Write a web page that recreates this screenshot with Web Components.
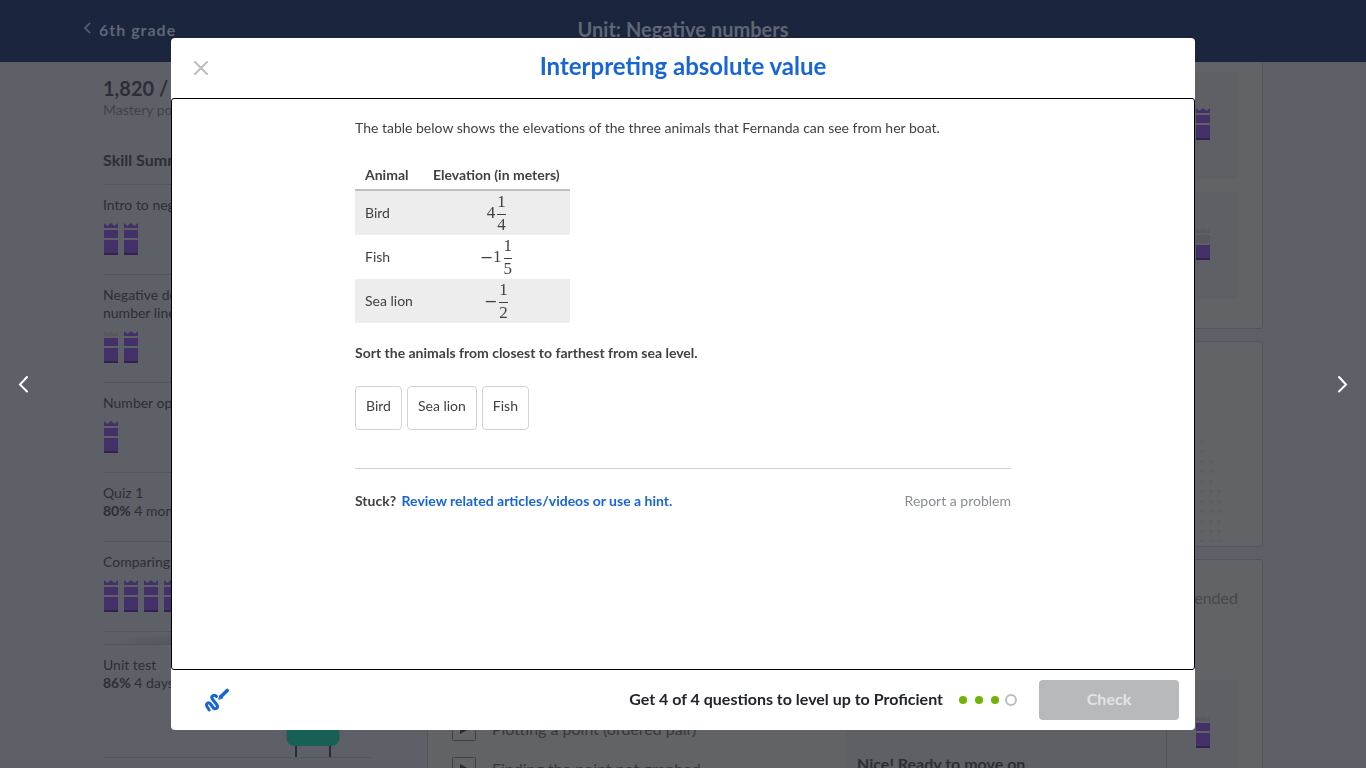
<!DOCTYPE html>
<html lang="en">
<head>
<meta charset="utf-8">
<title>Interpreting absolute value</title>
<style>
  body {
    margin: 0;
    height: 100vh;
    overflow: hidden;
    background: #5e6068;
    color: #2c2e35;
    font-family: Lato, "Liberation Sans", sans-serif;
    font-size: 14px;
    line-height: 18px;
    --line: #53555b;
    --card: #626366;
    --tile: #5e6066;
    --ink: #3f4244;
    --blue: #1865d6;
  }
</style>
</head>
<body>
<unit-page></unit-page>
<exercise-modal heading="Interpreting absolute value">
  <exercise-question></exercise-question>
</exercise-modal>

<script>
function defineElement(name, html, setup) {
  const template = document.createElement("template");
  template.innerHTML = html;

  customElements.define(name, class extends HTMLElement {
    constructor() {
      super();
      this.attachShadow({ mode: "open" });
      this.shadowRoot.appendChild(template.content.cloneNode(true));
    }

    connectedCallback() {
      if (setup) setup(this, this.shadowRoot);
    }
  });
}

// level 3 = full crown, 2 = no top, 1 = base only
defineElement("mastery-crown", `
<style>
  :host { display: block; width: 14px; height: 32px; }
  svg { display: block; }
  path { fill: #57595d; }
  .on { fill: #433069; }
  .base { fill: #2f2349; }
</style>
<svg width="14" height="32" viewBox="0 0 14 32" aria-hidden="true">
  <path data-level="3" d="M0 0l3.500 3L7 0l3.500 3L14 0v5H0z"/>
  <path data-level="2" d="M0 7h14v8H0z"/>
  <path data-level="1" d="M0 17h14v13H0z"/>
  <path class="base" d="M0 30h14v2H0z"/>
</svg>
`, (host, root) => {
  const level = Number(host.getAttribute("level") || 3);
  root.querySelectorAll("[data-level]").forEach(path => {
    path.classList.toggle("on", Number(path.dataset.level) <= level);
  });
});

defineElement("skill-item", `
<style>
  :host { display: block; border-top: 1px solid var(--line); padding: 11px 0 19px; }
  .crowns { display: flex; gap: 6px; margin-top: 9px; padding-left: 1px; }
  .crowns:empty { display: none; }
</style>
<slot></slot>
<div class="crowns"></div>
`, (host, root) => {
  const levels = (host.getAttribute("crowns") || "").split(" ").filter(Boolean);
  root.querySelector(".crowns").innerHTML =
    levels.map(level => `<mastery-crown level="${level}"></mastery-crown>`).join("");
});

defineElement("unit-header", `
<style>
  :host { display: block; background: #1b253d; color: #5f6674; }
  .bar {
    display: grid;
    grid-template-columns: 1fr auto 1fr;
    align-items: center;
    max-width: 1200px;
    height: 58px;
    padding-bottom: 4px;
    margin: 0 auto;
  }
  a {
    display: flex;
    align-items: center;
    gap: 8px;
    padding-top: 2px;
    color: inherit;
    font-size: 16px;
    font-weight: 700;
    letter-spacing: 1px;
    text-decoration: none;
  }
  h1 { margin: 0; font-size: 20px; line-height: 24px; }
</style>
<div class="bar">
  <a href="#"><svg width="8" height="16" viewBox="0 0 8 16" fill="none" stroke="currentColor" stroke-width="1.500"><path d="M7 1 2 6l5 5"/></svg>6th grade</a>
  <h1>Unit: Negative numbers</h1>
</div>
`);

defineElement("skill-sidebar", `
<style>
  :host { display: block; }
  .points { padding-top: 14px; font-size: 20px; line-height: 24px; font-weight: 700; }
  .caption { padding-top: 1px; color: #414349; }
  h2 { margin: 0; padding: 31px 0 15px; font-size: 16px; line-height: 19px; }
  .quiz { padding-bottom: 21px; }
  .last { padding-bottom: 0; }
  .shade {
    height: 12px;
    border-top: 1px solid var(--line);
    background: radial-gradient(ellipse at 50% 100%, #4c4e54, transparent 70%);
  }
  .desk { display: flex; justify-content: flex-end; padding-right: 31px; border-bottom: 1px solid var(--line); }
  .desk svg { display: block; }
</style>
<div class="points">1,820 / 2,000</div>
<div class="caption">Mastery points</div>
<h2>Skill Summary</h2>
<skill-item crowns="3 3">Intro to negative numbers</skill-item>
<skill-item crowns="2 3">Negative decimals on the<br>number line</skill-item>
<skill-item crowns="3">Number opposites</skill-item>
<skill-item class="quiz">Quiz 1<br><b>80%</b> 4 months ago</skill-item>
<skill-item crowns="3 3 3 3">Comparing negative numbers</skill-item>
<div class="shade"></div>
<skill-item class="last">Unit test<br><b>86%</b> 4 days ago</skill-item>
<div class="desk">
  <svg width="54" height="65" viewBox="0 0 54 65">
    <path d="M10 50v15M44 50v15" stroke="#292b33" stroke-width="2"/>
    <rect x="0.500" y="14" width="53" height="40" rx="8" fill="#186055"/>
  </svg>
</div>
`);

defineElement("lesson-tile", `
<style>
  :host { display: grid; grid-template-columns: 1fr 72px; background: var(--tile); height: 107px; }
  .text { padding: 75px 12px 0; font-size: 16px; font-weight: 700; }
  .score { display: flex; align-items: center; justify-content: flex-end; padding: 0 28px 4px 0; border-left: 1px solid var(--line); }
</style>
<div class="text"><slot></slot></div>
<div class="score"></div>
`, (host, root) => {
  root.querySelector(".score").innerHTML =
    `<mastery-crown level="${host.getAttribute("level")}"></mastery-crown>`;
});

defineElement("lesson-link", `
<style>
  :host { display: block; }
  a { display: flex; align-items: center; gap: 16px; color: #36383d; font-size: 16px; line-height: 24px; text-decoration: none; }
</style>
<a href="#">
  <svg width="24" height="24" viewBox="0 0 24 24"><rect x=".5" y=".5" width="23" height="23" rx="1" fill="none" stroke="#3f4146"/><path d="M8 7l9 5-9 5z" fill="#292b31"/></svg>
  <slot></slot>
</a>
`);

defineElement("lesson-cards", `
<style>
  :host { display: grid; gap: 12px; align-content: start; }
  section { box-sizing: border-box; background: var(--card); border: 1px solid var(--line); border-radius: 3px; padding: 24px; }
  .tiles { display: grid; gap: 13px; padding: 10px 24px 29px; border-top: 0; }
  .quiz { display: flex; justify-content: flex-end; align-items: flex-end; height: 206px; padding: 4px 39px; }
  .practice { padding-top: 29px; }
  .status { text-align: right; font-size: 16px; color: #46484c; }
  .columns { display: grid; grid-template-columns: 1fr 1fr; padding-top: 73px; align-items: start; }
  .links { display: grid; gap: 16px; padding-top: 37px; }
</style>
<section class="tiles">
  <lesson-tile level="3"></lesson-tile>
  <lesson-tile level="1"></lesson-tile>
</section>
<section class="quiz">
  <svg width="24" height="104" viewBox="0 0 24 104" fill="none" stroke="#5c5e62" stroke-width="3" stroke-dasharray="3 7">
    <path d="M3 2v102M12 22v82M20 52v52"/>
  </svg>
</section>
<section class="practice">
  <div class="status">Recommended</div>
  <div class="columns">
    <div class="links">
      <lesson-link>Plotting a point (ordered pair)</lesson-link>
      <lesson-link>Finding the point not graphed</lesson-link>
    </div>
    <lesson-tile level="2">Nice! Ready to move on</lesson-tile>
  </div>
</section>
`);

defineElement("unit-page", `
<style>
  :host { display: block; height: 100%; overflow: hidden; }
  main { display: grid; grid-template-columns: 268px 1fr; gap: 56px; max-width: 1160px; margin: 0 auto; }
</style>
<unit-header></unit-header>
<main>
  <skill-sidebar></skill-sidebar>
  <lesson-cards></lesson-cards>
</main>
`);

defineElement("exercise-modal", `
<style>
  :host {
    position: fixed;
    inset: 0;
    display: grid;
    grid-template-columns: minmax(48px, 1fr) minmax(0, 1024px) minmax(48px, 1fr);
    align-items: center;
  }
  button { font: inherit; border: 0; padding: 0; background: none; cursor: pointer; }
  button svg { display: block; margin: auto; }
  .nav { width: 48px; height: 48px; color: #fff; }
  .next { justify-self: end; }
  .dialog {
    display: grid;
    grid-template-rows: 60px 1fr 60px;
    height: calc(100vh - 76px);
    border-radius: 4px;
    background: #fff;
    overflow: hidden;
  }
  header { display: grid; grid-template-columns: 60px 1fr 60px; align-items: center; }
  .close { height: 60px; color: #babec2; }
  h2 { margin: 0; padding-bottom: 4px; text-align: center; font-size: 24px; line-height: 28px; color: var(--blue); }
  .content { border: 1px solid #000; border-radius: 3px; overflow: auto; }
  footer { display: flex; align-items: center; padding: 0 16px 0 32px; color: #21242c; }
  .goal { margin-left: auto; padding-bottom: 2px; font-size: 16px; font-weight: 700; }
  .dots { margin: 0 20px 0 14px; }
  .check { width: 140px; height: 40px; padding-bottom: 2px; border-radius: 4px; background: #b8b9bb; color: #e3e4e6; font-size: 16px; font-weight: 700; }
</style>
<button class="nav" aria-label="Previous">
  <svg width="12" height="18" viewBox="0 0 12 18" fill="none" stroke="currentColor" stroke-width="2" stroke-linecap="round"><path d="M9 2 2 9.500l7 7"/></svg>
</button>
<div class="dialog" role="dialog" aria-modal="true" aria-labelledby="title">
  <header>
    <button class="close" aria-label="Close">
      <svg width="14" height="14" viewBox="0 0 14 14" fill="none" stroke="currentColor" stroke-width="2" stroke-linecap="round"><path d="M1 1l12 12M13 1 1 13"/></svg>
    </button>
    <h2 id="title"></h2>
  </header>
  <div class="content"><slot></slot></div>
  <footer>
    <button aria-label="Scratchpad">
      <svg width="28" height="28" viewBox="0 0 28 28" fill="none" stroke="#1865d6" stroke-linecap="round" stroke-linejoin="round">
        <path stroke-width="3" d="M13.500 10.500C11.500 8 8 10 9 12.500l5 6.500c1.500 2.500-1 5-3.500 3l-3-4C5.500 15.500 2.500 17.500 4 20.500l2.200 3.500"/>
        <path stroke-width="3.600" d="M18.500 10 24.200 4.500"/>
        <path fill="#1865d6" stroke-width="1" d="M15.700 13l1.300-4 2.700 2.700z"/>
      </svg>
    </button>
    <span class="goal">Get 4 of 4 questions to level up to Proficient</span>
    <svg class="dots" width="62" height="14" viewBox="0 0 62 14" fill="#71b307">
      <circle cx="6" cy="7" r="4"/><circle cx="22" cy="7" r="4"/><circle cx="38" cy="7" r="4"/>
      <circle cx="54" cy="7" r="5" fill="none" stroke="#babec2" stroke-width="2"/>
    </svg>
    <button class="check" disabled>Check</button>
  </footer>
</div>
<button class="nav next" aria-label="Next">
  <svg width="12" height="18" viewBox="0 0 12 18" fill="none" stroke="currentColor" stroke-width="2" stroke-linecap="round"><path d="M3 2l7 7.500-7 7"/></svg>
</button>
`, (host, root) => {
  root.querySelector("h2").textContent = host.getAttribute("heading");
});

defineElement("mixed-number", `
<style>
  :host { display: inline-flex; align-items: center; font-family: "Liberation Serif", serif; font-size: 17px; line-height: 20px; }
  .sign { font-family: "DejaVu Math TeX Gyre", "DejaVu Serif", serif; font-size: 16px; }
  .fraction { display: grid; margin-left: 2px; text-align: center; }
  .top { border-bottom: 1px solid currentColor; padding-bottom: 2px; }
</style>
<span class="sign"></span><span class="whole"></span>
<span class="fraction"><span class="top"></span><span class="bottom"></span></span>
`, (host, root) => {
  root.querySelector(".sign").textContent = host.hasAttribute("negative") ? "\u2212" : "";
  ["whole", "top", "bottom"].forEach(part => {
    root.querySelector("." + part).textContent = host.getAttribute(part) || "";
  });
});

defineElement("sort-card", `
<style>
  :host { display: block; }
  button {
    display: block;
    height: 44px;
    padding: 0 10px 4px;
    border: 1px solid #d2d3d4;
    border-radius: 4px;
    background: #fff;
    color: inherit;
    font: inherit;
    cursor: grab;
  }
</style>
<button><slot></slot></button>
`);

defineElement("exercise-question", `
<style>
  :host { display: block; max-width: 656px; margin: 0 auto; padding-top: 20px; color: var(--ink); }
  p { margin: 0; }
  table { margin: 25px 0 21px; border-collapse: collapse; }
  th { padding: 4px 10px 5px; border-bottom: 2px solid #bcbec0; text-align: left; }
  td { height: 44px; padding: 0 10px; }
  td + td { text-align: center; }
  tbody tr:nth-child(odd) { background: #ededed; }
  mixed-number { vertical-align: middle; }
  .cards { display: flex; gap: 5px; padding: 24px 0 38px; }
  .help { display: flex; justify-content: space-between; border-top: 1px solid #d2d3d4; padding-top: 23px; }
  .help a { color: var(--blue); text-decoration: none; margin-left: 2px; }
  .help .report { color: #888d93; }
</style>
<p>The table below shows the elevations of the three animals that Fernanda can see from her boat.</p>
<table>
  <thead><tr><th>Animal</th><th>Elevation (in meters)</th></tr></thead>
  <tbody>
    <tr><td>Bird</td><td><mixed-number whole="4" top="1" bottom="4"></mixed-number></td></tr>
    <tr><td>Fish</td><td><mixed-number negative whole="1" top="1" bottom="5"></mixed-number></td></tr>
    <tr><td>Sea lion</td><td><mixed-number negative top="1" bottom="2"></mixed-number></td></tr>
  </tbody>
</table>
<p><b>Sort the animals from closest to farthest from sea level.</b></p>
<div class="cards">
  <sort-card>Bird</sort-card>
  <sort-card>Sea lion</sort-card>
  <sort-card>Fish</sort-card>
</div>
<div class="help">
  <b>Stuck? <a href="#">Review related articles/videos or use a hint.</a></b>
  <a class="report" href="#">Report a problem</a>
</div>
`);
</script>
</body>
</html>
